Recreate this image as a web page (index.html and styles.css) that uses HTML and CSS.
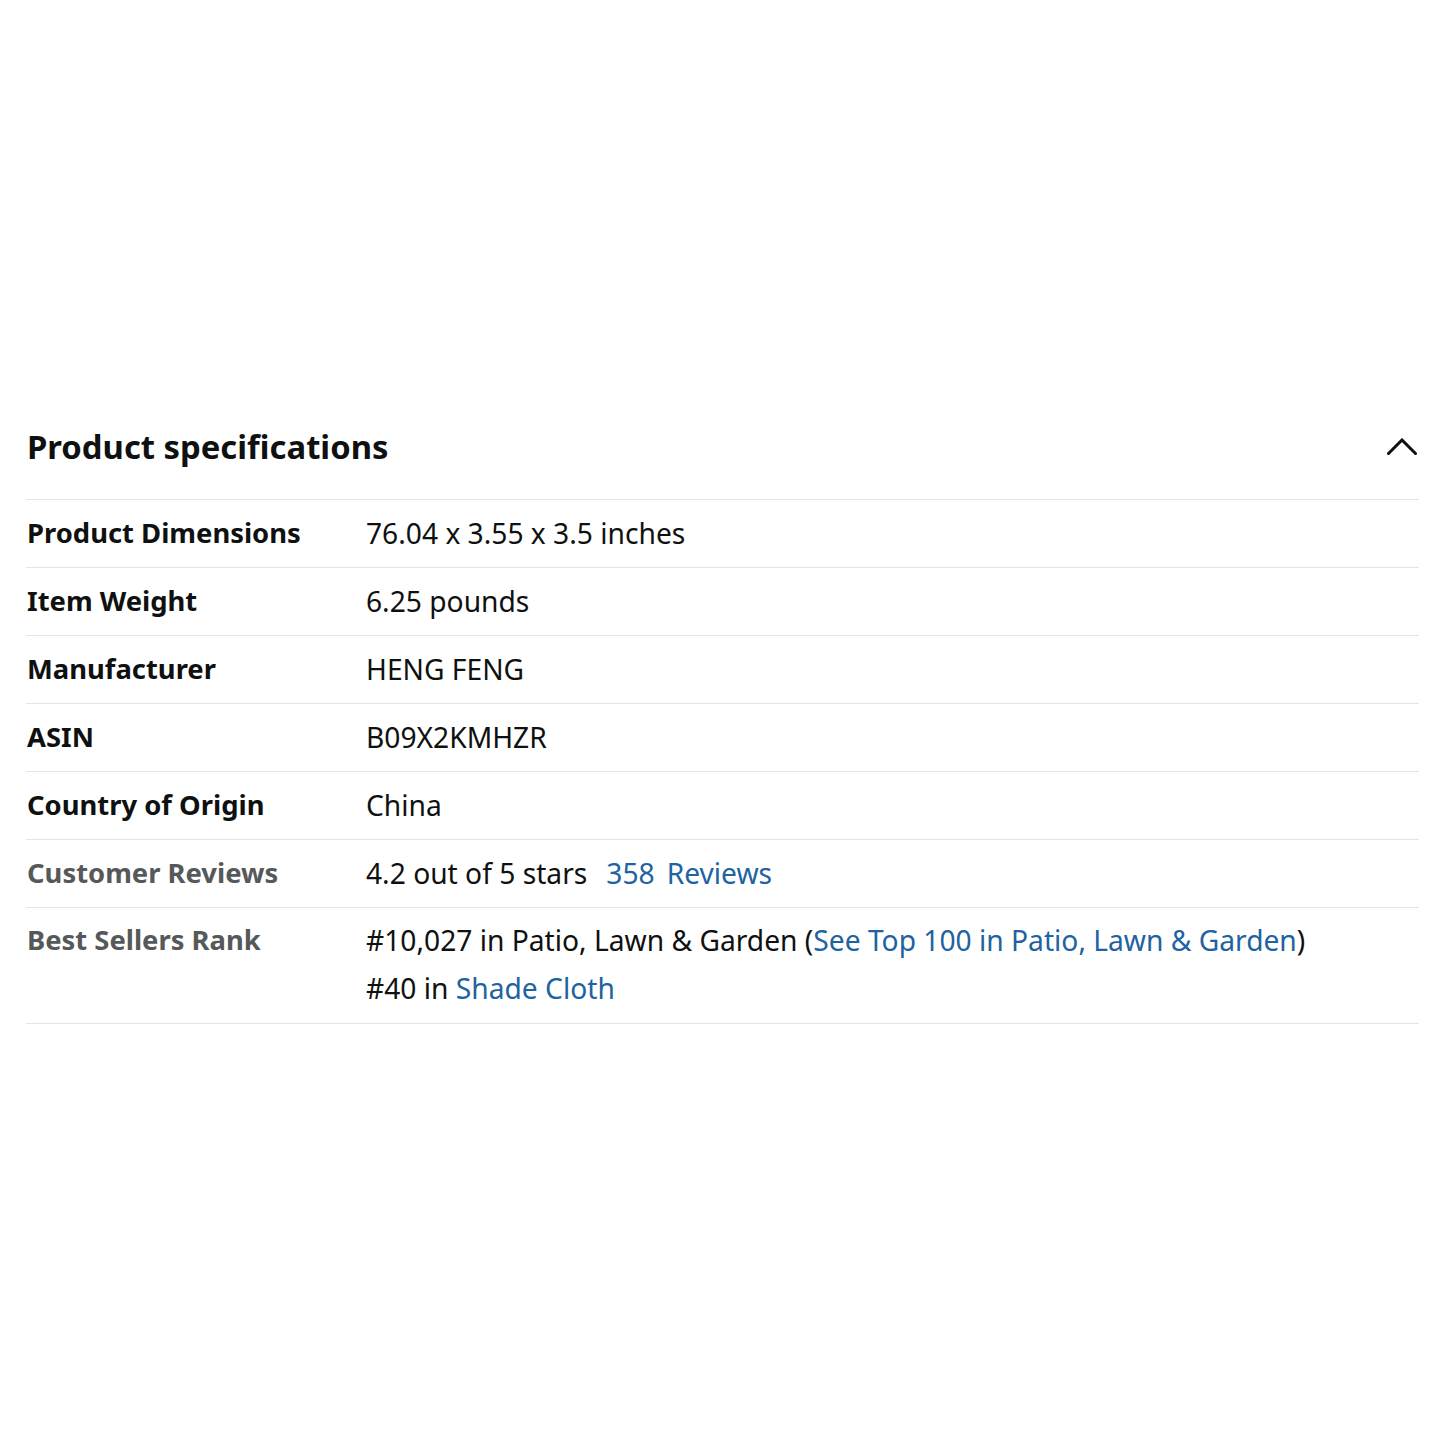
FILE: index.html
```html
<!DOCTYPE html>
<html lang="en">
<head>
<meta charset="utf-8">
<title>Product specifications</title>
<link rel="stylesheet" href="styles.css">
</head>
<body>
<section class="specs">
  <div class="specs-header">
    <h2 class="specs-title">Product specifications</h2>
    <svg class="chevron" width="30" height="18" viewBox="0 0 30 18" aria-hidden="true">
      <polyline points="1.5,15.5 15,2 28.5,15.5" fill="none" stroke="#0f1111" stroke-width="3" stroke-linecap="round" stroke-linejoin="miter"/>
    </svg>
  </div>
  <div class="spec-row">
    <div class="spec-label">Product Dimensions</div>
    <div class="spec-value">76.04 x 3.55 x 3.5 inches</div>
  </div>
  <div class="spec-row">
    <div class="spec-label">Item Weight</div>
    <div class="spec-value">6.25 pounds</div>
  </div>
  <div class="spec-row">
    <div class="spec-label">Manufacturer</div>
    <div class="spec-value">HENG FENG</div>
  </div>
  <div class="spec-row">
    <div class="spec-label">ASIN</div>
    <div class="spec-value">B09X2KMHZR</div>
  </div>
  <div class="spec-row">
    <div class="spec-label">Country of Origin</div>
    <div class="spec-value">China</div>
  </div>
  <div class="spec-row">
    <div class="spec-label muted">Customer Reviews</div>
    <div class="spec-value">4.2 out of 5 stars<a class="link reviews" href="#">358<span class="gap"></span>Reviews</a></div>
  </div>
  <div class="spec-row last">
    <div class="spec-label muted">Best Sellers Rank</div>
    <div class="spec-value">
      <div>#10,027 in Patio, Lawn &amp; Garden (<a class="link" href="#">See Top 100 in Patio, Lawn &amp; Garden</a>)</div>
      <div>#40 in <a class="link" href="#">Shade Cloth</a></div>
    </div>
  </div>
</section>
</body>
</html>
```

FILE: styles.css
```css
html, body {
  margin: 0;
  padding: 0;
  background: #ffffff;
}

body {
  font-family: "Noto Sans", "Open Sans", sans-serif;
  color: #0f1111;
}

.specs {
  padding: 421px 26px 0 26px;
}

.specs-header {
  display: flex;
  align-items: center;
  justify-content: space-between;
  padding: 0 0 26px 1px;
  border-bottom: 1px solid #e3e6e6;
}

.specs-title {
  margin: 0;
  font-size: 32.8px;
  font-weight: 700;
  line-height: 52px;
  color: #0f1111;
}

.chevron {
  display: block;
  margin-right: 2px;
}

.spec-row {
  display: flex;
  align-items: flex-start;
  padding: 9px 0 10px 1px;
  border-bottom: 1px solid #e3e6e6;
  font-size: 28.2px;
  line-height: 48px;
}

.spec-row.last {
  padding-top: 8px;
  padding-bottom: 11px;
}

.spec-label {
  width: 339px;
  flex: none;
  font-size: 27.4px;
  font-weight: 700;
  color: #0f1111;
}

.spec-label.muted {
  color: #565959;
}

.spec-value {
  flex: 1;
  color: #0f1111;
}

.link {
  color: #2162a1;
  text-decoration: none;
}

.reviews {
  margin-left: 19px;
}

.gap {
  display: inline-block;
  width: 12px;
}
```
